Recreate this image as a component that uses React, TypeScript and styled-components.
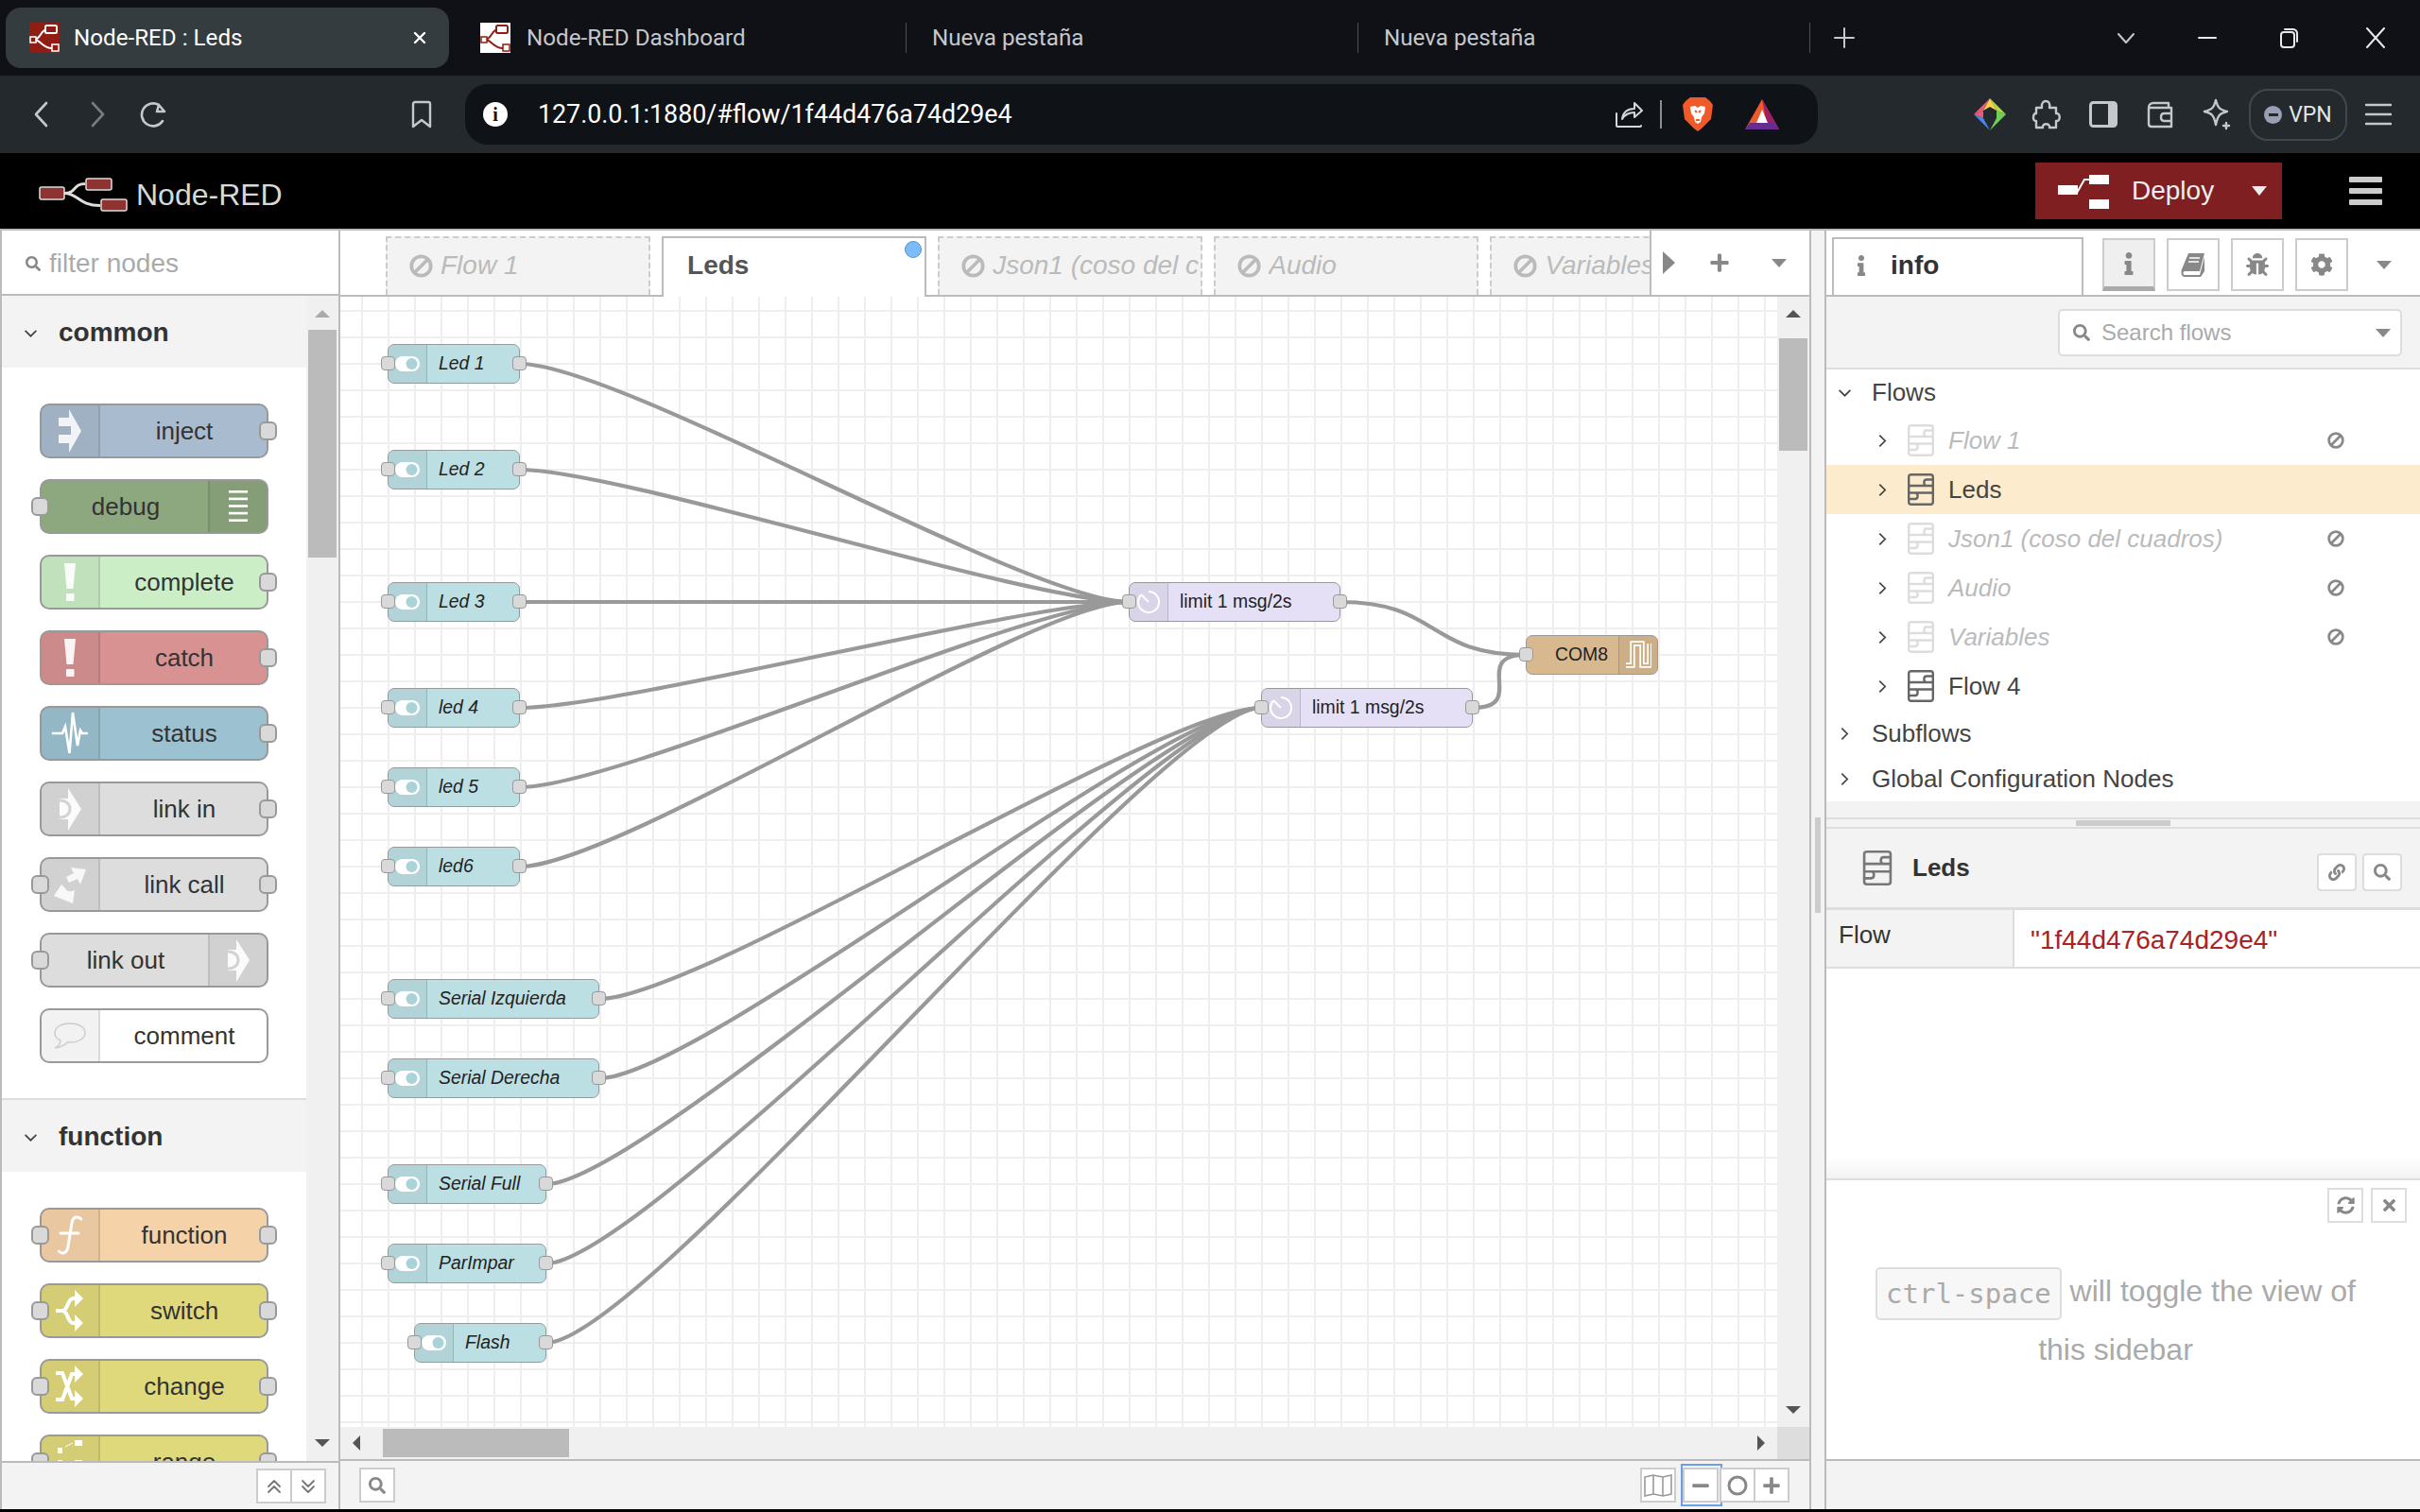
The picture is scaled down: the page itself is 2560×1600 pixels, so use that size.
import type { ReactNode } from "react"
import styled, { createGlobalStyle } from "styled-components"
import { FaBug, FaCog, FaInfo, FaLink, FaMinus, FaPlus, FaSearch, FaSyncAlt, FaTimes } from "react-icons/fa"

const GlobalStyle = createGlobalStyle`
    html, body {
        margin: 0;
        padding: 0;
        background: #000;
    }
    * {
        box-sizing: border-box;
    }
    body {
        width: 2560px;
        height: 1600px;
        overflow: hidden;
        font-family: "Liberation Sans", Arial, sans-serif;
    }
`

const Page = styled.div`
    width: 2560px;
    height: 1600px;
    display: flex;
    flex-direction: column;
`

/* browser chrome */

const TabStrip = styled.div`
    height: 80px;
    background: #0f1117;
    display: flex;
    align-items: center;
    padding-left: 6px;
    font-family: Roboto, sans-serif;
    font-size: 24.2px;
    color: #c4c8cc;
`

const ActiveTab = styled.div`
    width: 469px;
    height: 64px;
    background: #353c40;
    border-radius: 16px;
    display: flex;
    align-items: center;
    padding: 0 24px 0 25px;
    color: #fff;
    gap: 15px;
`

const BrowserTab = styled.div<{ $w: number; $pad: number; $sep?: boolean }>`
    width: ${(p) => p.$w}px;
    height: 32px;
    display: flex;
    align-items: center;
    gap: 17px;
    padding-left: ${(p) => p.$pad}px;
    border-right: ${(p) => (p.$sep ? "1px solid #4a4f55" : "none")};
`

const TabTitle = styled.span`
    flex: 1;
    white-space: nowrap;
`

const WindowControls = styled.div`
    margin-left: auto;
    display: flex;
    padding-right: 1px;
`

const ChromeCell = styled.div<{ $w: number }>`
    width: ${(p) => p.$w}px;
    display: flex;
    justify-content: center;
    align-items: center;
    flex-shrink: 0;
`

const Toolbar = styled.div`
    height: 82px;
    background: #23292d;
    display: flex;
    align-items: center;
`

const NavGroup = styled.div`
    width: 492px;
    padding-left: 13px;
    padding-right: 16px;
    display: flex;
    align-items: center;
`

const NavSpacer = styled.div`
    flex: 1;
`

const AddressBar = styled.div`
    width: 1431px;
    height: 64px;
    background: #0f1216;
    border-radius: 24px;
    display: flex;
    align-items: center;
    padding-left: 19px;
    padding-right: 25px;
`

const InfoDot = styled.div`
    width: 26px;
    height: 26px;
    border-radius: 50%;
    background: #fff;
    color: #0f1216;
    display: flex;
    align-items: center;
    justify-content: center;
    font-family: "Liberation Serif", serif;
    font-weight: 700;
    font-size: 20px;
`

const UrlText = styled.div`
    margin-left: 32px;
    font-family: Roboto, sans-serif;
    font-size: 26.8px;
    color: #fff;
    flex: 1;
`

const AddressSep = styled.div`
    width: 2px;
    height: 30px;
    background: #8a8f94;
    margin: 0 4px 0 18px;
`

const Extensions = styled.div`
    margin-left: auto;
    display: flex;
    align-items: center;
    padding-right: 30px;
`

const VpnPill = styled.div`
    width: 104px;
    height: 55px;
    border: 2px solid #41484d;
    border-radius: 20px;
    margin-left: 4px;
    margin-right: 19px;
    display: flex;
    align-items: center;
    justify-content: center;
    gap: 7px;
    color: #e4e6e8;
    font-family: Roboto, sans-serif;
    font-size: 23px;
`

const VpnDot = styled.span`
    width: 19px;
    height: 19px;
    border-radius: 50%;
    background: #9a9fb4;
    display: flex;
    align-items: center;
    justify-content: center;
    &::after {
        content: "";
        width: 10px;
        height: 3px;
        background: #23292d;
    }
`

/* node-red header */

const Header = styled.div`
    height: 80px;
    background: #000;
    display: flex;
    align-items: center;
    padding-left: 41px;
    color: #d8d8d8;
`

const Brand = styled.div`
    margin-top: 8px;
    display: flex;
    align-items: center;
    gap: 9px;
    font-size: 32px;
`

const DeployButton = styled.div`
    margin-left: auto;
    width: 261px;
    height: 60px;
    background: #7f1f22;
    color: #eee;
    font-size: 28px;
    display: flex;
    align-items: center;
    padding-left: 24px;
    gap: 24px;
`

const DeployCaret = styled.span`
    margin-left: 16px;
    width: 0;
    height: 0;
    border-left: 8px solid transparent;
    border-right: 8px solid transparent;
    border-top: 10px solid #eee;
`

const MenuBars = styled.div`
    width: 35px;
    margin-left: 71px;
    margin-right: 40px;
    display: flex;
    flex-direction: column;
    gap: 6px;
`

const MenuBar = styled.span`
    height: 6px;
    border-radius: 1px;
    background: #ccc;
`

/* main area */

const Main = styled.div`
    height: 1355px;
    background: #f3f3f3;
    border-top: 2px solid #bbb;
    display: flex;
`

const Palette = styled.div`
    width: 360px;
    border-left: 2px solid #bbb;
    border-right: 2px solid #bbb;
    display: flex;
    flex-direction: column;
    background: #fff;
`

const PaletteFilter = styled.div`
    height: 69px;
    border-bottom: 2px solid #bbb;
    display: flex;
    align-items: center;
    padding: 2px 0 0 25px;
    gap: 9px;
    font-size: 28px;
    color: #aaa;
`

const PaletteBody = styled.div`
    flex: 1;
    min-height: 0;
    display: flex;
    overflow: hidden;
`

const PaletteList = styled.div`
    width: 322px;
`

const CategoryHeader = styled.div`
    height: 76px;
    background: #f3f3f3;
    display: flex;
    align-items: center;
    padding: 2px 0 0 23px;
    gap: 22px;
    font-size: 28px;
    font-weight: 700;
    color: #333;
`

const CategoryNodes = styled.div<{ $border?: boolean }>`
    padding: 38px 0 37px 40px;
    display: flex;
    flex-direction: column;
    gap: 22px;
    border-bottom: ${(p) => (p.$border ? "2px solid #ddd" : "none")};
`

const PaletteNodeBox = styled.div<{ $bg: string; $right?: boolean }>`
    position: relative;
    width: 242px;
    height: 58px;
    flex-shrink: 0;
    background: ${(p) => p.$bg};
    border: 2px solid #999;
    border-radius: 10px;
    display: flex;
    flex-direction: ${(p) => (p.$right ? "row-reverse" : "row")};
    font-size: 26px;
    color: #333;
`

const PaletteIcon = styled.div<{ $right?: boolean }>`
    width: 62px;
    background: rgba(0, 0, 0, 0.05);
    border-radius: ${(p) => (p.$right ? "0 8px 8px 0" : "8px 0 0 8px")};
    ${(p) => (p.$right ? "border-left" : "border-right")}: 2px solid rgba(0, 0, 0, 0.1);
    display: flex;
    align-items: center;
    justify-content: center;
    flex-shrink: 0;
`

const PaletteLabel = styled.div`
    flex: 1;
    text-align: center;
    line-height: 54px;
    white-space: nowrap;
    padding-left: 2px;
`

const PalettePort = styled.span<{ $side: "in" | "out" }>`
    position: absolute;
    top: 17px;
    ${(p) => (p.$side === "in" ? "left: -11px" : "right: -11px")};
    width: 19px;
    height: 20px;
    background: #d9d9d9;
    border: 2px solid #999;
    border-radius: 6px;
`

const ScrollTrack = styled.div<{ $w?: number }>`
    position: relative;
    width: ${(p) => p.$w ?? 34}px;
    background: #f0f0f0;
    flex-shrink: 0;
`

const VThumb = styled.div<{ $top: number; $h: number }>`
    position: absolute;
    left: 2px;
    top: ${(p) => p.$top}px;
    width: 30px;
    height: ${(p) => p.$h}px;
    background: #bbb;
`

const Arrow = styled.span<{ $dir: "up" | "down" | "left" | "right"; $color: string; $x: number; $y: number }>`
    position: absolute;
    left: ${(p) => p.$x}px;
    top: ${(p) => p.$y}px;
    width: 0;
    height: 0;
    ${(p) =>
        p.$dir === "up"
            ? `border-left: 8px solid transparent; border-right: 8px solid transparent; border-bottom: 8px solid ${p.$color};`
            : p.$dir === "down"
              ? `border-left: 8px solid transparent; border-right: 8px solid transparent; border-top: 8px solid ${p.$color};`
              : p.$dir === "left"
                ? `border-top: 8px solid transparent; border-bottom: 8px solid transparent; border-right: 8px solid ${p.$color};`
                : `border-top: 8px solid transparent; border-bottom: 8px solid transparent; border-left: 8px solid ${p.$color};`}
`

const PaletteFooter = styled.div`
    height: 51px;
    background: #f3f3f3;
    border-top: 2px solid #bbb;
    display: flex;
    justify-content: flex-end;
    align-items: center;
    padding-right: 13px;
`

const FooterButton = styled.div<{ $w?: number }>`
    width: ${(p) => p.$w ?? 38}px;
    height: 37px;
    background: #fff;
    border: 2px solid #ccc;
    margin-left: -2px;
    display: flex;
    align-items: center;
    justify-content: center;
    color: #888;
    font-size: 20px;
`

/* workspace */

const Workspace = styled.div`
    width: 1556px;
    border-right: 2px solid #bbb;
    display: flex;
    flex-direction: column;
    background: #fff;
`

const TabBar = styled.div`
    height: 70px;
    border-bottom: 2px solid #bbb;
    display: flex;
    align-items: flex-end;
`

const TabScroller = styled.div`
    width: 1385px;
    height: 70px;
    padding-left: 48px;
    display: flex;
    align-items: flex-end;
    gap: 12.1px;
    position: relative;
    clip-path: inset(0 0 -2px 0);
`

const FlowTab = styled.div<{ $active?: boolean }>`
    position: relative;
    width: 280px;
    height: ${(p) => (p.$active ? 64 : 62)}px;
    flex-shrink: 0;
    padding: 0 0 ${(p) => (p.$active ? 4 : 2)}px ${(p) => (p.$active ? 25 : 23)}px;
    margin-bottom: ${(p) => (p.$active ? -2 : 0)}px;
    background: ${(p) => (p.$active ? "#fff" : "#f3f3f3")};
    border: 2px ${(p) => (p.$active ? "solid #bbb" : "dashed #ccc")};
    border-bottom: ${(p) => (p.$active ? "none" : "0")};
    color: ${(p) => (p.$active ? "#555" : "#bbb")};
    font-size: 28px;
    font-weight: ${(p) => (p.$active ? 700 : 400)};
    font-style: ${(p) => (p.$active ? "normal" : "italic")};
    display: flex;
    align-items: center;
    gap: 8px;
    white-space: nowrap;
`

const FlowTabLabel = styled.span`
    flex: 1;
    min-width: 0;
    overflow: hidden;
    margin-right: 2px;
`

const ChangedDot = styled.span`
    position: absolute;
    right: 3px;
    top: 3px;
    width: 18px;
    height: 18px;
    border-radius: 50%;
    background: #7bbdfa;
    border: 1px solid #5b94c4;
`

const TabControls = styled.div`
    flex: 1;
    height: 68px;
    align-self: flex-start;
    border-left: 2px solid #bbb;
    display: flex;
    align-items: center;
    color: #888;
    padding-left: 12px;
`

const ScrollTabArrow = styled.span`
    width: 0;
    height: 0;
    margin-right: 36px;
    border-top: 12px solid transparent;
    border-bottom: 12px solid transparent;
    border-left: 13px solid #888;
`

const CanvasRow = styled.div`
    height: 1196px;
    display: flex;
`

const Canvas = styled.div`
    position: relative;
    width: 1520px;
    height: 1196px;
    overflow: hidden;
    background-color: #fff;
    background-image: linear-gradient(to right, #eee 2px, transparent 2px),
        linear-gradient(to bottom, #eee 2px, transparent 2px);
    background-size: 28px 28px;
    background-position: 22px 14px;
`

const Wires = styled.svg`
    position: absolute;
    left: 0;
    top: 0;
`

const CanvasNode = styled.div<{ $bg: string; $right?: boolean; $italic?: boolean }>`
    position: absolute;
    height: 42px;
    background: ${(p) => p.$bg};
    border: 1.5px solid #999;
    border-radius: 7px;
    display: flex;
    flex-direction: ${(p) => (p.$right ? "row-reverse" : "row")};
    align-items: stretch;
    font-size: 19.4px;
    font-style: ${(p) => (p.$italic ? "italic" : "normal")};
    color: #222;
`

const CanvasIcon = styled.div<{ $right?: boolean }>`
    width: 41px;
    flex-shrink: 0;
    background: rgba(0, 0, 0, 0.05);
    border-radius: ${(p) => (p.$right ? "0 6px 6px 0" : "6px 0 0 6px")};
    ${(p) => (p.$right ? "border-left" : "border-right")}: 1px solid rgba(0, 0, 0, 0.15);
    display: flex;
    align-items: center;
    justify-content: center;
`

const CanvasLabel = styled.div<{ $right?: boolean }>`
    flex: 1;
    line-height: 38px;
    white-space: nowrap;
    padding: ${(p) => (p.$right ? "0 11px 0 0" : "0 0 0 12px")};
    text-align: ${(p) => (p.$right ? "right" : "left")};
`

const CanvasPort = styled.span<{ $side: "in" | "out" }>`
    position: absolute;
    top: 12px;
    ${(p) => (p.$side === "in" ? "left: -8px" : "right: -8px")};
    width: 15px;
    height: 15px;
    background: #d9d9d9;
    border: 1.5px solid #999;
    border-radius: 4px;
`

const HScrollRow = styled.div`
    height: 34px;
    background: #f0f0f0;
    position: relative;
    display: flex;
    justify-content: flex-end;
`

const HThumb = styled.div`
    position: absolute;
    left: 45px;
    top: 2px;
    width: 197px;
    height: 30px;
    background: #bbb;
`

const ScrollCorner = styled.div`
    width: 34px;
    background: #ddd;
`

const WorkspaceFooter = styled.div`
    height: 53px;
    border-top: 2px solid #bbb;
    background: #f3f3f3;
    display: flex;
    align-items: center;
    padding-left: 22px;
    padding-right: 21px;
`

const ZoomGroup = styled.div`
    margin-left: auto;
    display: flex;
    align-items: center;
`

const FocusRing = styled.div`
    outline: 2px solid #6e9fe6;
    outline-offset: 2px;
    margin: 0 3px 0 9px;
    display: flex;
`

/* sidebar */

const Separator = styled.div`
    width: 14px;
    padding: 621px 0 0 4px;
    background: #f3f3f3;
`

const SeparatorHandle = styled.div`
    width: 6px;
    height: 101px;
    background: #ccc;
`

const Sidebar = styled.div`
    width: 630px;
    border-left: 2px solid #bbb;
    display: flex;
    flex-direction: column;
    background: #fff;
`

const SideTabs = styled.div`
    height: 70px;
    border-bottom: 2px solid #bbb;
    display: flex;
    align-items: flex-start;
    padding: 8px 0 0 6px;
`

const InfoTab = styled.div`
    width: 266px;
    height: 61px;
    margin-top: -1px;
    flex-shrink: 0;
    background: #fff;
    border: 2px solid #bbb;
    border-bottom: none;
    display: flex;
    align-items: center;
    padding: 0 0 3px 18px;
    gap: 20px;
    font-size: 28px;
    font-weight: 700;
    color: #333;
`

const SideButton = styled.div<{ $active?: boolean }>`
    width: 56px;
    height: 56px;
    flex-shrink: 0;
    margin-left: ${(p) => (p.$active ? 20 : 12)}px;
    background: ${(p) => (p.$active ? "#efefef" : "#fff")};
    border: 2px solid #ccc;
    border-bottom: ${(p) => (p.$active ? "5px solid #aaa" : "2px solid #ccc")};
    display: flex;
    align-items: center;
    justify-content: center;
    color: #888;
    font-size: 24px;
`

const CaretBox = styled.div<{ $w: number; $h?: number }>`
    width: ${(p) => p.$w}px;
    height: ${(p) => p.$h ?? 56}px;
    display: flex;
    align-items: center;
    justify-content: center;
`

const Caret = styled.span<{ $color?: string }>`
    width: 0;
    height: 0;
    border-left: 8px solid transparent;
    border-right: 8px solid transparent;
    border-top: 9px solid ${(p) => p.$color ?? "#888"};
`

const SearchRow = styled.div`
    height: 77px;
    background: #f3f3f3;
    border-bottom: 2px solid #ddd;
    padding: 13px 19px 0 245px;
`

const SearchBox = styled.div`
    height: 50px;
    background: #fff;
    border: 2px solid #ddd;
    border-radius: 5px;
    display: flex;
    align-items: center;
    padding: 0 10px 0 14px;
    gap: 12px;
    font-size: 24px;
    color: #aaa;
`

const SearchCaret = styled.div`
    margin-left: auto;
    display: flex;
    align-items: center;
`

const Tree = styled.div`
    height: 457px;
    font-size: 26px;
    color: #444;
`

const TreeRow = styled.div<{ $h: number; $child?: boolean; $selected?: boolean; $off?: boolean }>`
    height: ${(p) => p.$h}px;
    display: flex;
    align-items: center;
    padding-left: ${(p) => (p.$child ? 52 : 12)}px;
    padding-right: 80px;
    background: ${(p) => (p.$selected ? "#fcebcd" : "transparent")};
    color: ${(p) => (p.$off ? "#bbb" : "#444")};
    font-style: ${(p) => (p.$off ? "italic" : "normal")};
`

const Chevron = styled.svg<{ $gap: number }>`
    width: 15px;
    height: 15px;
    margin-right: ${(p) => p.$gap}px;
    flex-shrink: 0;
`

const TreeLabel = styled.span`
    margin-left: 15px;
`

const RowStatus = styled.div`
    margin-left: auto;
    display: flex;
`

const SideGap = styled.div`
    height: 17px;
    background: #f3f3f3;
`

const SplitHandle = styled.div`
    height: 12px;
    background: #f3f3f3;
    border-top: 2px solid #ddd;
    border-bottom: 2px solid #ddd;
    display: flex;
    justify-content: center;
    padding-top: 1px;
`

const SplitGrip = styled.span`
    width: 100px;
    height: 6px;
    background: #ccc;
`

const InfoHeader = styled.div`
    height: 83px;
    background: #f3f3f3;
    display: flex;
    align-items: center;
    padding: 0 19px 0 38px;
    gap: 21px;
    font-size: 26px;
    font-weight: 700;
    color: #333;
`

const SmallButton = styled.div`
    width: 42px;
    height: 40px;
    margin-top: 8px;
    background: #fff;
    border: 2px solid #ddd;
    border-radius: 4px;
    display: flex;
    align-items: center;
    justify-content: center;
    color: #888;
    font-size: 18px;
`

const InfoActions = styled.div`
    margin-left: auto;
    display: flex;
    gap: 6px;
`

const InfoRow = styled.div`
    height: 65px;
    border-top: 3px solid #ddd;
    border-bottom: 2px solid #ddd;
    display: flex;
`

const InfoKey = styled.div`
    width: 199px;
    background: #f3f3f3;
    border-right: 2px solid #ddd;
    padding: 11px 0 0 13px;
    font-size: 26px;
    color: #333;
`

const InfoValue = styled.div`
    padding: 16px 0 0 17px;
    font-size: 28px;
    color: #aa2222;
`

const InfoEmpty = styled.div`
    height: 222px;
    background: linear-gradient(to bottom, #fff 0, #fff 90%, #f3f3f3 100%);
`

const HelpPanel = styled.div`
    height: 297px;
    border-top: 2px solid #ddd;
    padding: 8px 14px 0 0;
    display: flex;
    flex-direction: column;
`

const HelpActions = styled.div`
    display: flex;
    justify-content: flex-end;
    gap: 8px;
`

const HelpButton = styled.div`
    width: 38px;
    height: 37px;
    border: 2px solid #ddd;
    display: flex;
    align-items: center;
    justify-content: center;
    color: #888;
    font-size: 19px;
`

const HelpText = styled.div`
    margin: 41px 0 0 36px;
    width: 540px;
    text-align: center;
    font-size: 32px;
    line-height: 62px;
    color: #aaa;
`

const Kbd = styled.span`
    display: inline-block;
    height: 56px;
    line-height: 52px;
    padding: 0 9px;
    margin-right: 9px;
    background: #f7f7f7;
    border: 2px solid #ddd;
    border-radius: 5px;
    font-family: "DejaVu Sans Mono", monospace;
    font-size: 29px;
    vertical-align: middle;
`

const SidebarFooter = styled.div`
    height: 53px;
    border-top: 2px solid #bbb;
    background: #f3f3f3;
`

/* drawings */

function NodeRedMark({ bg, stroke, box }: { bg: string; stroke: string; box: string }) {
    return (
        <svg width="32" height="32" viewBox="0 0 32 32">
            <rect width="32" height="32" fill={bg} />
            <path d="M5 18C12 18 12 7 19 7M5 18C12 18 14 27 24 27" fill="none" stroke={stroke} strokeWidth="2" />
            <rect x="17" y="3" width="12" height="8" rx="1.5" fill={box} stroke={stroke} strokeWidth="2" />
            <rect x="1" y="15" width="6" height="6" fill={box} stroke={stroke} strokeWidth="1.5" />
            <rect x="24" y="23" width="7" height="7" fill={box} stroke={stroke} strokeWidth="1.5" />
        </svg>
    )
}

function HeaderLogo() {
    return (
        <svg width="94" height="36" viewBox="0 0 94 36">
            <path d="M27 16.5C40 16.5 36 6.5 49 6.5M27 16.5C42 16.5 42 29.5 65 29.5" fill="none" stroke="#ddd" strokeWidth="3" />
            <rect x="1" y="10" width="26" height="13" rx="2" fill="#8f3232" stroke="#ddd" strokeWidth="1.5" />
            <rect x="50" y="1" width="27" height="12" rx="2" fill="#8f3232" stroke="#ddd" strokeWidth="1.5" />
            <rect x="66" y="23" width="27" height="12" rx="2" fill="#8f3232" stroke="#ddd" strokeWidth="1.5" />
        </svg>
    )
}

function DeployIcon() {
    return (
        <svg width="54" height="38" viewBox="0 0 54 38">
            <rect x="0" y="13" width="21" height="10" fill="#fff" />
            <rect x="33" y="2" width="21" height="10" fill="#fff" />
            <rect x="33" y="28" width="21" height="10" fill="#fff" />
            <path d="M20 21L28 7H33" fill="none" stroke="#fff" strokeWidth="2" />
        </svg>
    )
}

function StrokeIcon({ w, h, d, color = "#c4c8cc", sw = 2 }: { w: number; h: number; d: string; color?: string; sw?: number }) {
    return (
        <svg width={w} height={h} viewBox={`0 0 ${w} ${h}`}>
            <path d={d} fill="none" stroke={color} strokeWidth={sw} strokeLinecap="round" strokeLinejoin="round" />
        </svg>
    )
}

function BraveIcon() {
    return (
        <svg width="32" height="36" viewBox="0 0 32 36">
            <path d="M8 0H24L29 4L32 8L30 23L20 33L16 36L12 33L2 23L0 8L3 4Z" fill="#f0592a" />
            <path d="M8 10L13 9L16 11L19 9L24 10L23 17L20 21L19 26L16 28L13 26L12 21L9 17Z" fill="#fff" />
            <path d="M13 14L15 16M19 14L17 16M14 24H18" stroke="#f0592a" strokeWidth="2" />
        </svg>
    )
}

function AuroraIcon() {
    return (
        <svg width="36" height="32" viewBox="0 0 36 32">
            <path d="M18 0L36 32H0Z" fill="#f0592a" />
            <path d="M18 0L36 32H24Z" fill="#9e1f63" />
            <path d="M5 25H31L36 32H0Z" fill="#662d91" />
            <path d="M18 11L24 25H12Z" fill="#fff" />
        </svg>
    )
}

function DiamondIcon() {
    return (
        <svg width="34" height="34" viewBox="0 0 34 34">
            <path d="M17 0L24 13L17 9Z" fill="#f9d648" />
            <path d="M17 0L10 13L17 9Z" fill="#f9d648" />
            <path d="M24 13L34 17L17 34L24 21Z" fill="#6fce5a" />
            <path d="M10 13L0 17L10 21Z" fill="#ea5b7a" />
            <path d="M10 21L0 17L17 34Z" fill="#4b87e8" />
            <path d="M17 0L34 17L24 13Z" fill="#b6d94c" />
            <path d="M17 0L0 17L10 13Z" fill="#ea5b7a" />
        </svg>
    )
}

function FlowIcon({ color = "#666", w = 28, h = 34 }: { color?: string; w?: number; h?: number }) {
    return (
        <svg width={w} height={h} viewBox="0 0 28 34" style={{ flexShrink: 0 }}>
            <g fill="none" stroke={color} strokeWidth="2.4">
                <rect x="1.2" y="1.2" width="25.6" height="31.6" rx="2.5" />
                <path d="M1 13H27M27 6.5H20C16.5 6.5 16.5 13 20 13" />
                <path d="M1 20.5H27M1 27H8C11.5 27 11.5 20.5 8 20.5" />
            </g>
        </svg>
    )
}

function BanIcon({ size, color }: { size: number; color: string }) {
    return (
        <svg width={size} height={size} viewBox="0 0 24 24" style={{ flexShrink: 0 }}>
            <circle cx="12" cy="12" r="9.8" fill="none" stroke={color} strokeWidth="3.6" />
            <path d="M5 19L19 5" stroke={color} strokeWidth="3.6" />
        </svg>
    )
}

function BookIcon() {
    return (
        <svg width="26" height="26" viewBox="0 0 26 26">
            <path d="M8 1H25L20 20H4C2 20 2 24 4 24H20L25 5V20L21 26H4C0 26 0 20 1 18Z" fill="#888" />
            <path d="M9 6H20M8 10H19" stroke="#fff" strokeWidth="1.6" />
        </svg>
    )
}

const linkArrow = (
    <svg width="23" height="45" viewBox="0 0 23 45">
        <path d="M9 0L23 22L9 45V33H0V11H9Z" fill="#fff" fillOpacity="0.9" />
        <path d="M0 13C7 13 11 17 11 22C11 27 7 31 0 31" fill="none" stroke="#d2d2d2" strokeWidth="3" />
    </svg>
)

const paletteIcons: Record<string, ReactNode> = {
    inject: (
        <svg width="24" height="46" viewBox="0 0 24 46">
            <path d="M11 0L24 23L11 46V36H0V27H13V18H0V9H11Z" fill="#fff" fillOpacity="0.85" />
        </svg>
    ),
    debug: (
        <svg width="20" height="34" viewBox="0 0 20 34" fill="#fff">
            <rect y="0" width="20" height="2.6" />
            <rect y="7.6" width="20" height="2.6" />
            <rect y="15.2" width="20" height="2.6" />
            <rect y="22.8" width="20" height="2.6" />
            <rect y="30.4" width="20" height="2.6" />
        </svg>
    ),
    alert: (
        <svg width="12" height="40" viewBox="0 0 12 40" fill="#fff" fillOpacity="0.9">
            <path d="M0 0H12L9.5 27H2.5Z" />
            <rect x="2" y="32" width="8.5" height="8" rx="1" />
        </svg>
    ),
    status: (
        <svg width="38" height="48" viewBox="0 0 38 48">
            <path d="M0 24H11L14 17L18.5 45L22 2L27 37L30 21L32 24H38" fill="none" stroke="#fff" strokeWidth="2.6" />
        </svg>
    ),
    link: linkArrow,
    call: (
        <svg width="34" height="40" viewBox="0 0 34 40" fill="#fff" fillOpacity="0.85">
            <path d="M18 2L34 4L28 20L25 14L16 18L13 12L21 8Z" />
            <path d="M0 32L8 20L12 24C14 28 18 28 22 26L20 40Z" />
        </svg>
    ),
    comment: (
        <svg width="34" height="28" viewBox="0 0 34 28">
            <path d="M17 1C8 1 1 5 1 11C1 15 4 18 7 19C7 22 5 25 1 27C7 26 12 24 14 21C15 21 16 21 17 21C26 21 33 17 33 11C33 5 26 1 17 1Z" fill="none" stroke="#ccc" strokeWidth="1.4" />
        </svg>
    ),
    function: (
        <svg width="26" height="42" viewBox="0 0 26 42">
            <path d="M25 4C20 0 16 2 15 8L11 33C10 40 5 42 1 38M3 19H22" fill="none" stroke="#fff" strokeWidth="3" strokeLinecap="round" />
        </svg>
    ),
    switch: (
        <svg width="30" height="46" viewBox="0 0 30 46">
            <path d="M0 23H7C13 23 12 11 18 10H22M7 23C13 23 12 35 18 36H22" fill="none" stroke="#fff" strokeWidth="4" />
            <path d="M20 1L29 10L20 19ZM20 27L29 36L20 45Z" fill="#fff" />
        </svg>
    ),
    change: (
        <svg width="30" height="46" viewBox="0 0 30 46">
            <path d="M0 9H7L17 36H22M0 37H7L17 10H22" fill="none" stroke="#fff" strokeWidth="4" />
            <path d="M20 1L29 10L20 19ZM20 27L29 36L20 45Z" fill="#fff" />
        </svg>
    ),
    range: (
        <svg width="26" height="46" viewBox="0 0 26 46" fill="#fff">
            <rect x="0" y="8" width="5" height="6" />
            <rect x="18" y="0" width="8" height="6" />
            <rect x="0" y="21" width="5" height="6" />
            <rect x="18" y="21" width="8" height="6" />
            <path d="M8 7L16 3" stroke="#fff" strokeWidth="1" />
        </svg>
    ),
}

function ToggleIcon() {
    return (
        <svg width="26" height="16" viewBox="0 0 26 16">
            <rect width="26" height="16" rx="8" fill="#fff" />
            <circle cx="17.5" cy="8" r="6" fill="#a8d3d8" />
        </svg>
    )
}

function TimerIcon() {
    return (
        <svg width="26" height="26" viewBox="0 0 26 26">
            <path d="M13 2A11 11 0 1 1 5 5.5" fill="none" stroke="#fff" strokeWidth="2" />
            <path d="M5 5L13 13" stroke="#fff" strokeWidth="2" />
        </svg>
    )
}

function PulseIcon() {
    return (
        <svg width="28" height="30" viewBox="0 0 28 30">
            <path d="M1 26H8V3H18V26H26V3" fill="none" stroke="#fff" strokeWidth="5.4" />
            <path d="M1 26H8V3H18V26H26V3" fill="none" stroke="#cfb187" strokeWidth="2" />
        </svg>
    )
}

function MapIcon() {
    return (
        <svg width="30" height="24" viewBox="0 0 30 24">
            <path d="M1 3L10 1L20 3L29 1V21L20 23L10 21L1 23ZM10 1V21M20 3V23" fill="none" stroke="#999" strokeWidth="1.6" />
        </svg>
    )
}

/* data */

type PaletteEntry = { name: string; bg: string; icon: string; input?: boolean; output?: boolean; right?: boolean }

const commonNodes: PaletteEntry[] = [
    { name: "inject", bg: "#a9bbcf", icon: "inject", output: true },
    { name: "debug", bg: "#8da77f", icon: "debug", input: true, right: true },
    { name: "complete", bg: "#cceec7", icon: "alert", output: true },
    { name: "catch", bg: "#d99292", icon: "alert", output: true },
    { name: "status", bg: "#9cc1d1", icon: "status", output: true },
    { name: "link in", bg: "#dddddd", icon: "link", output: true },
    { name: "link call", bg: "#dddddd", icon: "call", input: true, output: true },
    { name: "link out", bg: "#dddddd", icon: "link", input: true, right: true },
    { name: "comment", bg: "#ffffff", icon: "comment" },
]

const functionNodes: PaletteEntry[] = [
    { name: "function", bg: "#f6d2a9", icon: "function", input: true, output: true },
    { name: "switch", bg: "#e0d97c", icon: "switch", input: true, output: true },
    { name: "change", bg: "#e0d97c", icon: "change", input: true, output: true },
    { name: "range", bg: "#e0d97c", icon: "range", input: true, output: true },
]

// canvas space starts at x=360, y=314 of the page
const ORIGIN_X = 360
const ORIGIN_Y = 314

type FlowNode = {
    id: string
    label: string
    x: number
    cy: number
    w: number
    kind: "toggle" | "timer" | "serial"
}

const flowNodes: FlowNode[] = [
    { id: "l1", label: "Led 1", x: 410, cy: 385, w: 140, kind: "toggle" },
    { id: "l2", label: "Led 2", x: 410, cy: 497, w: 140, kind: "toggle" },
    { id: "l3", label: "Led 3", x: 410, cy: 637, w: 140, kind: "toggle" },
    { id: "l4", label: "led 4", x: 410, cy: 749, w: 140, kind: "toggle" },
    { id: "l5", label: "led 5", x: 410, cy: 833, w: 140, kind: "toggle" },
    { id: "l6", label: "led6", x: 410, cy: 917, w: 140, kind: "toggle" },
    { id: "si", label: "Serial Izquierda", x: 410, cy: 1057, w: 224, kind: "toggle" },
    { id: "sd", label: "Serial Derecha", x: 410, cy: 1141, w: 224, kind: "toggle" },
    { id: "sf", label: "Serial Full", x: 410, cy: 1253, w: 168, kind: "toggle" },
    { id: "pi", label: "ParImpar", x: 410, cy: 1337, w: 168, kind: "toggle" },
    { id: "fl", label: "Flash", x: 438, cy: 1421, w: 140, kind: "toggle" },
    { id: "d1", label: "limit 1 msg/2s", x: 1194, cy: 637, w: 224, kind: "timer" },
    { id: "d2", label: "limit 1 msg/2s", x: 1334, cy: 749, w: 224, kind: "timer" },
    { id: "com", label: "COM8", x: 1614, cy: 693, w: 140, kind: "serial" },
]

const links: [string, string][] = [
    ["l1", "d1"],
    ["l2", "d1"],
    ["l3", "d1"],
    ["l4", "d1"],
    ["l5", "d1"],
    ["l6", "d1"],
    ["si", "d2"],
    ["sd", "d2"],
    ["sf", "d2"],
    ["pi", "d2"],
    ["fl", "d2"],
    ["d1", "com"],
    ["d2", "com"],
]

function wirePath(from: FlowNode, to: FlowNode) {
    const x1 = from.x + from.w - ORIGIN_X
    const y1 = from.cy - ORIGIN_Y
    const x2 = to.x - ORIGIN_X
    const y2 = to.cy - ORIGIN_Y
    const delta = Math.hypot(x2 - x1, y2 - y1)
    const nodeWidth = 140
    const scale = delta < nodeWidth ? 0.75 - 0.75 * ((nodeWidth - delta) / nodeWidth) : 0.75
    const off = nodeWidth * scale
    return `M${x1} ${y1}C${x1 + off} ${y1} ${x2 - off} ${y2} ${x2} ${y2}`
}

const flowTabs = [
    { name: "Flow 1", off: true },
    { name: "Leds", off: false },
    { name: "Json1 (coso del cuadros)", off: true },
    { name: "Audio", off: true },
    { name: "Variables", off: true },
]

const treeFlows = [
    { name: "Flow 1", off: true },
    { name: "Leds", selected: true },
    { name: "Json1 (coso del cuadros)", off: true },
    { name: "Audio", off: true },
    { name: "Variables", off: true },
    { name: "Flow 4" },
]

function TreeChevron({ open, gap }: { open?: boolean; gap: number }) {
    return (
        <Chevron $gap={gap} viewBox="0 0 14 14">
            <path d={open ? "M1.5 4.5L7 10L12.5 4.5" : "M4 1.5L9.5 7L4 12.5"} fill="none" stroke="#444" strokeWidth="1.6" />
        </Chevron>
    )
}

function PaletteNode({ node }: { node: PaletteEntry }) {
    return (
        <PaletteNodeBox $bg={node.bg} $right={node.right}>
            <PaletteIcon $right={node.right}>{paletteIcons[node.icon]}</PaletteIcon>
            <PaletteLabel>{node.name}</PaletteLabel>
            {node.input && <PalettePort $side="in" />}
            {node.output && <PalettePort $side="out" />}
        </PaletteNodeBox>
    )
}

function FlowNodeBox({ node }: { node: FlowNode }) {
    const serial = node.kind === "serial"
    const timer = node.kind === "timer"
    const bg = serial ? "#d8b98f" : timer ? "#e6e0f6" : "#bcdfe4"
    return (
        <CanvasNode
            $bg={bg}
            $right={serial}
            $italic={node.kind === "toggle"}
            style={{ left: node.x - ORIGIN_X, top: node.cy - 21 - ORIGIN_Y, width: node.w }}
        >
            <CanvasIcon $right={serial}>
                {node.kind === "toggle" && <ToggleIcon />}
                {timer && <TimerIcon />}
                {serial && <PulseIcon />}
            </CanvasIcon>
            <CanvasLabel $right={serial}>{node.label}</CanvasLabel>
            <CanvasPort $side="in" />
            {!serial && <CanvasPort $side="out" />}
        </CanvasNode>
    )
}

export default function App() {
    const byId = Object.fromEntries(flowNodes.map((n) => [n.id, n]))

    return (
        <Page>
            <GlobalStyle />
            <TabStrip>
                <ActiveTab>
                    <NodeRedMark bg="#8f1d14" stroke="#fff" box="#8f1d14" />
                    <TabTitle>Node-RED : Leds</TabTitle>
                    <StrokeIcon w={14} h={14} sw={2.4} color="#fff" d="M2 2L12 12M12 2L2 12" />
                </ActiveTab>
                <BrowserTab $w={484} $pad={33} $sep>
                    <NodeRedMark bg="#fff" stroke="#8f1d14" box="#fff" />
                    <TabTitle>Node-RED Dashboard</TabTitle>
                </BrowserTab>
                <BrowserTab $w={478} $pad={27} $sep>
                    <TabTitle>Nueva pestaña</TabTitle>
                </BrowserTab>
                <BrowserTab $w={478} $pad={27} $sep>
                    <TabTitle>Nueva pestaña</TabTitle>
                </BrowserTab>
                <ChromeCell $w={72}>
                    <StrokeIcon w={22} h={22} d="M11 1V21M1 11H21" />
                </ChromeCell>
                <WindowControls>
                    <ChromeCell $w={92}>
                        <StrokeIcon w={20} h={12} d="M2 2L10 11L18 2" />
                    </ChromeCell>
                    <ChromeCell $w={80}>
                        <StrokeIcon w={20} h={4} color="#e8e8e8" d="M1 2H19" />
                    </ChromeCell>
                    <ChromeCell $w={92}>
                        <StrokeIcon w={20} h={22} color="#e8e8e8" d="M2 8C2 6 3 5 5 5H13C15 5 16 6 16 8V18C16 20 15 21 13 21H5C3 21 2 20 2 18ZM6 2H15C17 2 19 4 19 6V15" />
                    </ChromeCell>
                    <ChromeCell $w={92}>
                        <StrokeIcon w={22} h={22} color="#e8e8e8" d="M2 1L20 21M20 1L2 21" />
                    </ChromeCell>
                </WindowControls>
            </TabStrip>

            <Toolbar>
                <NavGroup>
                    <ChromeCell $w={60}>
                        <StrokeIcon w={16} h={28} sw={2.6} d="M14 2L3 14L14 26" />
                    </ChromeCell>
                    <ChromeCell $w={62}>
                        <StrokeIcon w={16} h={28} sw={2.6} color="#767b80" d="M2 2L13 14L2 26" />
                    </ChromeCell>
                    <ChromeCell $w={56}>
                        <StrokeIcon w={30} h={30} sw={2.6} d="M24 22A12 12 0 1 1 20 5M20 5L18 12L26 12Z" />
                    </ChromeCell>
                    <NavSpacer />
                    <ChromeCell $w={60}>
                        <StrokeIcon w={22} h={30} sw={2.4} d="M2 4C2 3 3 2 4 2H18C19 2 20 3 20 4V28L11 21L2 28Z" />
                    </ChromeCell>
                </NavGroup>
                <AddressBar>
                    <InfoDot>i</InfoDot>
                    <UrlText>127.0.0.1:1880/#flow/1f44d476a74d29e4</UrlText>
                    <StrokeIcon w={30} h={30} color="#d4d6d8" d="M2 14V27C2 28 3 28 4 28H26C27 28 28 28 28 27M8 20C9 13 13 9 21 9V3L29 11L21 18V13C15 13 11 15 8 20Z" />
                    <AddressSep />
                    <ChromeCell $w={68}>
                        <BraveIcon />
                    </ChromeCell>
                    <ChromeCell $w={68}>
                        <AuroraIcon />
                    </ChromeCell>
                </AddressBar>
                <Extensions>
                    <ChromeCell $w={60}>
                        <DiamondIcon />
                    </ChromeCell>
                    <ChromeCell $w={60}>
                        <StrokeIcon w={32} h={32} sw={2.4} d="M5 9H11C10 4 13 2 15 2C18 2 20 4 19 9H26V15C31 14 31 24 26 23V30H19C20 25 11 25 12 30H5V23C1 24 1 15 5 15Z" />
                    </ChromeCell>
                    <ChromeCell $w={60}>
                        <svg width="30" height="28" viewBox="0 0 30 28">
                            <rect x="1.5" y="1.5" width="27" height="25" rx="3" fill="none" stroke="#c4c8cc" strokeWidth="3" />
                            <rect x="20" y="2" width="8" height="24" fill="#c4c8cc" />
                        </svg>
                    </ChromeCell>
                    <ChromeCell $w={60}>
                        <StrokeIcon w={30} h={30} sw={2.4} d="M3 8C3 5 5 3 8 3H24V8M3 8V25C3 27 4 28 6 28H27V8H5M27 14H19C15 14 15 22 19 22H27" />
                    </ChromeCell>
                    <ChromeCell $w={60}>
                        <StrokeIcon w={30} h={34} sw={2.4} d="M14 2C16 10 18 12 26 14C18 16 16 18 14 28C12 18 10 16 2 14C10 12 12 10 14 2ZM25 26V32M22 29H28" />
                    </ChromeCell>
                    <VpnPill>
                        <VpnDot />
                        VPN
                    </VpnPill>
                    <ChromeCell $w={28}>
                        <StrokeIcon w={28} h={26} sw={2.6} d="M1 3H27M1 13H27M1 23H27" />
                    </ChromeCell>
                </Extensions>
            </Toolbar>

            <Header>
                <Brand>
                    <HeaderLogo />
                    Node-RED
                </Brand>
                <DeployButton>
                    <DeployIcon />
                    Deploy
                    <DeployCaret />
                </DeployButton>
                <MenuBars>
                    <MenuBar />
                    <MenuBar />
                    <MenuBar />
                </MenuBars>
            </Header>

            <Main>
                <Palette>
                    <PaletteFilter>
                        <FaSearch size={16} color="#888" />
                        filter nodes
                    </PaletteFilter>
                    <PaletteBody>
                        <PaletteList>
                            <CategoryHeader>
                                <TreeChevron open gap={0} />
                                common
                            </CategoryHeader>
                            <CategoryNodes $border>
                                {commonNodes.map((n) => (
                                    <PaletteNode key={n.name} node={n} />
                                ))}
                            </CategoryNodes>
                            <CategoryHeader>
                                <TreeChevron open gap={0} />
                                function
                            </CategoryHeader>
                            <CategoryNodes>
                                {functionNodes.map((n) => (
                                    <PaletteNode key={n.name} node={n} />
                                ))}
                            </CategoryNodes>
                        </PaletteList>
                        <ScrollTrack>
                            <Arrow $dir="up" $color="#aaa" $x={9} $y={15} />
                            <VThumb $top={36} $h={241} />
                            <Arrow $dir="down" $color="#555" $x={9} $y={1210} />
                        </ScrollTrack>
                    </PaletteBody>
                    <PaletteFooter>
                        <FooterButton>
                            <StrokeIcon w={16} h={16} sw={1.8} color="#777" d="M2 8L8 2L14 8M2 14L8 8L14 14" />
                        </FooterButton>
                        <FooterButton>
                            <StrokeIcon w={16} h={16} sw={1.8} color="#777" d="M2 2L8 8L14 2M2 8L8 14L14 8" />
                        </FooterButton>
                    </PaletteFooter>
                </Palette>

                <Workspace>
                    <TabBar>
                        <TabScroller>
                            {flowTabs.map((t) => (
                                <FlowTab key={t.name} $active={!t.off}>
                                    {t.off && <BanIcon size={25} color="#bbb" />}
                                    <FlowTabLabel>{t.name}</FlowTabLabel>
                                    {!t.off && <ChangedDot />}
                                </FlowTab>
                            ))}
                        </TabScroller>
                        <TabControls>
                            <ScrollTabArrow />
                            <FaPlus size={22} />
                            <CaretBox $w={104} $h={68}>
                                <Caret />
                            </CaretBox>
                        </TabControls>
                    </TabBar>
                    <CanvasRow>
                        <Canvas>
                            <Wires width="1520" height="1196" viewBox="0 0 1520 1196">
                                {links.map(([a, b]) => (
                                    <path key={a + b} d={wirePath(byId[a], byId[b])} fill="none" stroke="#999" strokeWidth="4.2" />
                                ))}
                            </Wires>
                            {flowNodes.map((n) => (
                                <FlowNodeBox key={n.id} node={n} />
                            ))}
                        </Canvas>
                        <ScrollTrack>
                            <Arrow $dir="up" $color="#555" $x={9} $y={14} />
                            <VThumb $top={44} $h={119} />
                            <Arrow $dir="down" $color="#555" $x={9} $y={1174} />
                        </ScrollTrack>
                    </CanvasRow>
                    <HScrollRow>
                        <Arrow $dir="left" $color="#555" $x={13} $y={9} />
                        <HThumb />
                        <Arrow $dir="right" $color="#555" $x={1499} $y={9} />
                        <ScrollCorner />
                    </HScrollRow>
                    <WorkspaceFooter>
                        <FooterButton>
                            <FaSearch size={18} />
                        </FooterButton>
                        <ZoomGroup>
                            <FooterButton>
                                <MapIcon />
                            </FooterButton>
                            <FocusRing>
                                <FooterButton>
                                    <FaMinus size={20} />
                                </FooterButton>
                            </FocusRing>
                            <FooterButton>
                                <svg width="22" height="22" viewBox="0 0 22 22">
                                    <circle cx="11" cy="11" r="9" fill="none" stroke="#888" strokeWidth="3" />
                                </svg>
                            </FooterButton>
                            <FooterButton>
                                <FaPlus size={20} />
                            </FooterButton>
                        </ZoomGroup>
                    </WorkspaceFooter>
                </Workspace>

                <Separator>
                    <SeparatorHandle />
                </Separator>

                <Sidebar>
                    <SideTabs>
                        <InfoTab>
                            <FaInfo size={22} color="#888" />
                            info
                        </InfoTab>
                        <SideButton $active>
                            <FaInfo />
                        </SideButton>
                        <SideButton>
                            <BookIcon />
                        </SideButton>
                        <SideButton>
                            <FaBug />
                        </SideButton>
                        <SideButton>
                            <FaCog />
                        </SideButton>
                        <CaretBox $w={76}>
                            <Caret />
                        </CaretBox>
                    </SideTabs>
                    <SearchRow>
                        <SearchBox>
                            <FaSearch size={18} color="#888" />
                            Search flows
                            <SearchCaret>
                                <Caret />
                            </SearchCaret>
                        </SearchBox>
                    </SearchRow>
                    <Tree>
                        <TreeRow $h={49}>
                            <TreeChevron open gap={21} />
                            Flows
                        </TreeRow>
                        {treeFlows.map((f) => (
                            <TreeRow key={f.name} $h={52} $child $selected={f.selected} $off={f.off}>
                                <TreeChevron gap={19} />
                                <FlowIcon color={f.off ? "#ddd" : "#666"} />
                                <TreeLabel>{f.name}</TreeLabel>
                                {f.off && (
                                    <RowStatus>
                                        <BanIcon size={18} color="#888" />
                                    </RowStatus>
                                )}
                            </TreeRow>
                        ))}
                        <TreeRow $h={48}>
                            <TreeChevron gap={21} />
                            Subflows
                        </TreeRow>
                        <TreeRow $h={48}>
                            <TreeChevron gap={21} />
                            Global Configuration Nodes
                        </TreeRow>
                    </Tree>
                    <SideGap />
                    <SplitHandle>
                        <SplitGrip />
                    </SplitHandle>
                    <InfoHeader>
                        <FlowIcon color="#777" w={32} h={37} />
                        Leds
                        <InfoActions>
                            <SmallButton>
                                <FaLink />
                            </SmallButton>
                            <SmallButton>
                                <FaSearch />
                            </SmallButton>
                        </InfoActions>
                    </InfoHeader>
                    <InfoRow>
                        <InfoKey>Flow</InfoKey>
                        <InfoValue>"1f44d476a74d29e4"</InfoValue>
                    </InfoRow>
                    <InfoEmpty />
                    <HelpPanel>
                        <HelpActions>
                            <HelpButton>
                                <FaSyncAlt />
                            </HelpButton>
                            <HelpButton>
                                <FaTimes />
                            </HelpButton>
                        </HelpActions>
                        <HelpText>
                            <Kbd>ctrl-space</Kbd>will toggle the view of this sidebar
                        </HelpText>
                    </HelpPanel>
                    <SidebarFooter />
                </Sidebar>
            </Main>
        </Page>
    )
}
